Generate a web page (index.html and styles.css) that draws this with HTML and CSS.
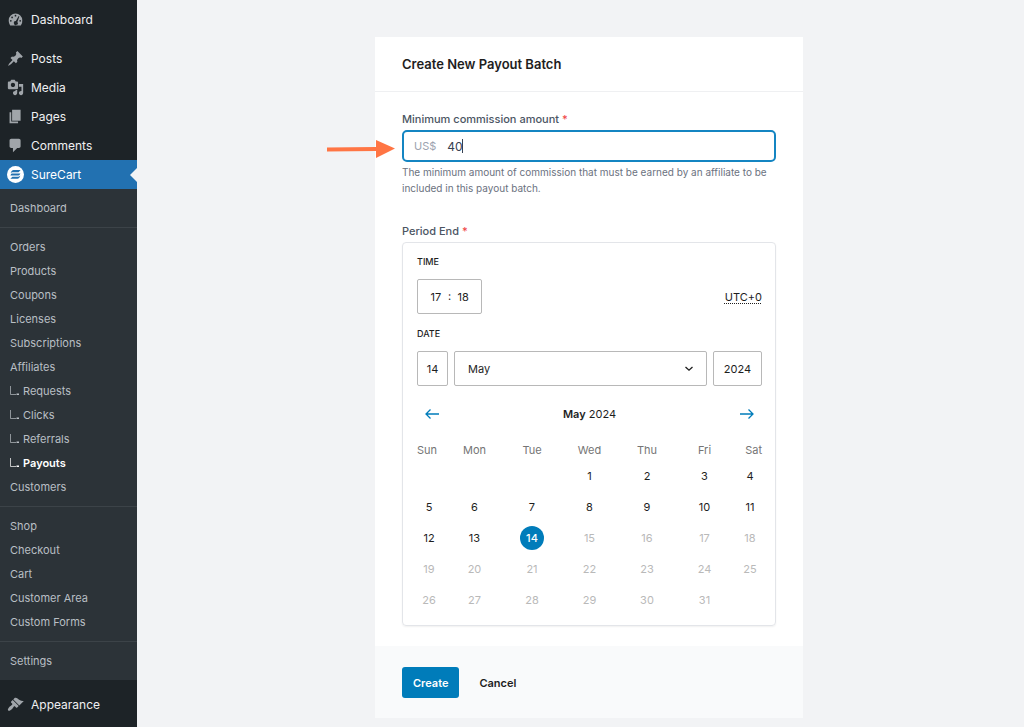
FILE: index.html
```html
<!DOCTYPE html>
<html lang="en">
<head>
<meta charset="utf-8">
<meta name="viewport" content="width=device-width, initial-scale=1">
<title>Create New Payout Batch</title>
<link rel="stylesheet" href="styles.css">
</head>
<body>
<svg class="defs" aria-hidden="true">
  <symbol id="elbow" viewBox="0 0 11 12"><path d="M.5 1v8.5H6" fill="none" stroke="currentColor" opacity=".7"/><path d="M6.500 8.500h2.500v1.500H6.500z" fill="currentColor"/></symbol>
</svg>
<div class="app">
  <nav class="sidebar">
    <ul class="menu">
      <li><a class="menu-link" href="#"><svg class="icon" viewBox="0 0 20 20"><path fill-rule="evenodd" d="M3.760 17h12.480A8 8 0 0 0 18 11a8 8 0 1 0-16 0c0 2.300.66 4.500 1.760 6zM10 4.500a1 1 0 1 1 0 2 1 1 0 0 1 0-2zM4.500 10.500a1 1 0 1 1 0 2 1 1 0 0 1 0-2zM6 6.500a1 1 0 1 1 0 2 1 1 0 0 1 0-2zM15.500 10.500a1 1 0 1 1 0 2 1 1 0 0 1 0-2zM13.800 6l.7.5-2.300 6.300a2.300 2.300 0 1 1-1.800-.9z"/></svg>Dashboard</a></li>
      <li class="gap"><a class="menu-link" href="#"><svg class="icon" viewBox="0 0 20 20"><path d="M10.440 3.020l1.820-1.820 6.360 6.350-1.830 1.820c-1.050-.68-2.480-.57-3.410.36l-.75.75c-.92.93-1.040 2.350-.35 3.410l-1.830 1.820-2.410-2.410-2.800 2.790c-.42.42-3.380 2.710-3.800 2.290s1.860-3.390 2.280-3.810l2.790-2.790L4.100 9.360l1.830-1.820c1.050.69 2.480.57 3.400-.36l.75-.75c.93-.92 1.050-2.350.36-3.410z"/></svg>Posts</a></li>
      <li><a class="menu-link" href="#"><svg class="icon" viewBox="0 0 20 20"><path fill-rule="evenodd" d="M13 11V4c0-.55-.45-1-1-1h-1.670L9 1H5L3.670 3H2c-.55 0-1 .45-1 1v7c0 .55.45 1 1 1h10c.55 0 1-.45 1-1zM7 4.500c1.380 0 2.500 1.120 2.500 2.500S8.380 9.500 7 9.500 4.500 8.380 4.500 7 5.620 4.500 7 4.500zM14 6h5v10.500c0 1.380-1.120 2.500-2.500 2.500S14 17.880 14 16.500s1.120-2.500 2.500-2.500c.17 0 .34.02.5.05V9h-3V6zm-4 8.050V13h2v3.500c0 1.380-1.120 2.500-2.500 2.500S7 17.880 7 16.500 8.120 14 9.500 14c.17 0 .34.02.5.05z"/></svg>Media</a></li>
      <li><a class="menu-link" href="#"><svg class="icon" viewBox="0 0 20 20"><path d="M6 15V2h10v13H6zm-1 1h8v2H3V5h2v11z"/></svg>Pages</a></li>
      <li><a class="menu-link" href="#"><svg class="icon" viewBox="0 0 20 20"><path d="M5 2h9c1.100 0 2 .9 2 2v7c0 1.100-.9 2-2 2h-2l-5 5v-5H5c-1.100 0-2-.9-2-2V4c0-1.100.9-2 2-2z"/></svg>Comments</a></li>
      <li><a class="menu-link current" href="#"><svg class="icon" viewBox="0 0 20 20"><circle cx="10" cy="10" r="10"/><g fill="#2271b1"><path d="M7.800 4.800h8.200L13.600 7.400H6.400C5.600 7.400 5 8 4.300 8.600 4.800 6.300 6 4.800 7.800 4.800z"/><path d="M5.600 8.700h10.200l-.7 1.400c-.3.700-.9 1.100-1.700 1.100H4l.7-1.400c.2-.6.500-.9.900-1.100z"/><path d="M3.900 15.100h8.300c1.800 0 3-1.600 3.500-3.800-.7.600-1.300 1.200-2.200 1.200H6.400z"/></g></svg>SureCart</a>
        <div class="submenu">
          <ul>
            <li><a href="#">Dashboard</a></li>
          </ul>
          <ul>
            <li><a href="#">Orders</a></li>
            <li><a href="#">Products</a></li>
            <li><a href="#">Coupons</a></li>
            <li><a href="#">Licenses</a></li>
            <li><a href="#">Subscriptions</a></li>
            <li><a href="#">Affiliates</a></li>
            <li><a href="#"><svg class="elbow"><use href="#elbow"/></svg>Requests</a></li>
            <li><a href="#"><svg class="elbow"><use href="#elbow"/></svg>Clicks</a></li>
            <li><a href="#"><svg class="elbow"><use href="#elbow"/></svg>Referrals</a></li>
            <li><a class="active" href="#"><svg class="elbow"><use href="#elbow"/></svg>Payouts</a></li>
            <li><a href="#">Customers</a></li>
          </ul>
          <ul>
            <li><a href="#">Shop</a></li>
            <li><a href="#">Checkout</a></li>
            <li><a href="#">Cart</a></li>
            <li><a href="#">Customer Area</a></li>
            <li><a href="#">Custom Forms</a></li>
          </ul>
          <ul>
            <li><a href="#">Settings</a></li>
          </ul>
        </div>
      </li>
      <li class="gap"><a class="menu-link" href="#"><svg class="icon" viewBox="0 0 20 20"><path d="M14.480 11.060L7.410 3.990l1.500-1.500c.5-.56 2.300-.47 3.510.32 1.210.8 1.430 1.280 2.910 2.100 1.180.64 2.450 1.260 4.450.85zm-.71.71L6.700 4.700 4.930 6.470c-.39.39-.39 1.020 0 1.410l1.060 1.060c.39.39.39 1.030 0 1.420-.6.6-1.430 1.110-2.210 1.690-.35.26-.7.53-1.010.84C1.430 14.230.4 16.080 1.400 17.070c.99 1 2.840-.03 4.180-1.360.31-.31.58-.66.85-1.020.57-.78 1.080-1.610 1.690-2.210.39-.39 1.020-.39 1.410 0l1.060 1.060c.39.39 1.020.39 1.410 0z"/></svg>Appearance</a></li>
      <li><a class="menu-link" href="#"><svg class="icon" viewBox="0 0 20 20"><path d="M13.110 4.360L9.870 7.600 8 5.730l3.240-3.240c.35-.34 1.050-.2 1.560.32.52.51.66 1.210.31 1.550zm-8 1.770l.91-1.120 9.010 9.010-1.190.84c-.71.71-2.630 1.160-3.820 1.160H6.140L4.900 17.260c-.59.59-1.540.59-2.120 0-.59-.58-.59-1.530 0-2.120l1.240-1.240v-3.880c0-1.130.4-3.190 1.090-3.890z"/></svg></a></li>
    </ul>
  </nav>

  <main class="content">
    <form class="card">
      <header class="card-header"><h1>Create New Payout Batch</h1></header>
      <div class="card-body">
        <label class="label" for="amount">Minimum commission amount <span class="required">*</span></label>
        <div class="money">
          <span class="prefix">US$</span>
          <input id="amount" type="text" value="40" required>
          <span class="caret"></span>
          <svg class="pointer" viewBox="0 0 68 18" aria-hidden="true"><path d="M0 7.500L49 7V0l19 8.500L49 18v-7L0 11.500z"/></svg>
        </div>
        <p class="help">The minimum amount of commission that must be earned by an affiliate to be included in this payout batch.</p>

        <div class="label" id="period">Period End <span class="required">*</span></div>
        <section class="picker" aria-labelledby="period">
          <h2>Time</h2>
          <div class="time-row">
            <div class="time">
              <input type="text" value="17" aria-label="Hours"><span>:</span><input type="text" value="18" aria-label="Minutes">
            </div>
            <abbr>UTC+0</abbr>
          </div>
          <h2>Date</h2>
          <div class="date-row">
            <input class="day-field" type="text" value="14" aria-label="Day">
            <div class="select">
              <select aria-label="Month"><option>May</option></select>
              <svg viewBox="0 0 10 6" aria-hidden="true"><path d="M1.500 1L5 4.200 8.500 1"/></svg>
            </div>
            <input class="year-field" type="text" value="2024" aria-label="Year">
          </div>
          <div class="month-nav">
            <button type="button" aria-label="Previous month"><svg viewBox="0 0 16 12"><path d="M15 6H2M6.500 1.500L2 6l4.500 4.500"/></svg></button>
            <div><strong>May</strong> 2024</div>
            <button type="button" aria-label="Next month"><svg viewBox="0 0 16 12"><path d="M1 6h13M9.500 1.500L14 6l-4.500 4.500"/></svg></button>
          </div>
          <table class="calendar">
            <colgroup><col class="edge"><col span="5"><col class="edge"></colgroup>
            <thead><tr><th>Sun</th><th>Mon</th><th>Tue</th><th>Wed</th><th>Thu</th><th>Fri</th><th>Sat</th></tr></thead>
            <tbody>
              <tr><td></td><td></td><td></td><td><button type="button">1</button></td><td><button type="button">2</button></td><td><button type="button">3</button></td><td><button type="button">4</button></td></tr>
              <tr><td><button type="button">5</button></td><td><button type="button">6</button></td><td><button type="button">7</button></td><td><button type="button">8</button></td><td><button type="button">9</button></td><td><button type="button">10</button></td><td><button type="button">11</button></td></tr>
              <tr><td><button type="button">12</button></td><td><button type="button">13</button></td><td><button type="button" class="selected">14</button></td><td><button type="button" disabled>15</button></td><td><button type="button" disabled>16</button></td><td><button type="button" disabled>17</button></td><td><button type="button" disabled>18</button></td></tr>
              <tr><td><button type="button" disabled>19</button></td><td><button type="button" disabled>20</button></td><td><button type="button" disabled>21</button></td><td><button type="button" disabled>22</button></td><td><button type="button" disabled>23</button></td><td><button type="button" disabled>24</button></td><td><button type="button" disabled>25</button></td></tr>
              <tr><td><button type="button" disabled>26</button></td><td><button type="button" disabled>27</button></td><td><button type="button" disabled>28</button></td><td><button type="button" disabled>29</button></td><td><button type="button" disabled>30</button></td><td><button type="button" disabled>31</button></td><td></td></tr>
            </tbody>
          </table>
        </section>
      </div>
      <footer class="card-footer">
        <button class="btn primary" type="submit">Create</button>
        <button class="btn" type="button">Cancel</button>
      </footer>
    </form>
  </main>
</div>
</body>
</html>
```
FILE: styles.css
```css
* { box-sizing: border-box; }

body {
  margin: 0;
  background: #f2f3f5;
  color: #1e1e1e;
  font-family: Inter, "Liberation Sans", sans-serif;
  font-size: 11px;
}

ul, h1, h2, p { margin: 0; padding: 0; }
ul { list-style: none; }
a { text-decoration: none; }
input, select, button { font: inherit; color: inherit; margin: 0; }
button { border: 0; background: none; padding: 0; cursor: pointer; }
.defs { position: absolute; width: 0; height: 0; }

.app { display: flex; height: 100vh; overflow: hidden; }

/* Sidebar */
.sidebar { flex: 0 0 137px; background: #1d2327; overflow: hidden; }
.menu { padding-top: 5px; }
.menu > .gap { margin-top: 10px; }
.menu-link {
  position: relative;
  display: flex;
  align-items: center;
  gap: 7px;
  height: 29px;
  padding-left: 7px;
  color: #f0f0f1;
  font-size: 12px;
}
.icon { width: 17px; height: 17px; fill: #a0a5aa; }
.menu-link.current { background: #2271b1; color: #fff; }
.current .icon { fill: #fff; }
.current::after {
  content: "";
  position: absolute;
  right: 0;
  top: 8px;
  border: 7px solid transparent;
  border-left-width: 0;
  border-right-color: #f2f3f5;
}
.submenu { background: #2c3338; }
.submenu ul { padding: 7px 0; }
.submenu ul + ul { border-top: 1px solid #3c4348; }
.submenu a {
  display: flex;
  align-items: center;
  gap: 2px;
  height: 24px;
  padding-left: 10px;
  color: #b9bfc4;
}
.submenu .active { color: #fff; font-weight: 600; }
.elbow { width: 11px; height: 12px; }

/* Card */
.content { flex: 1; padding: 37px 0 0 17px; }
.card { max-width: 428px; margin: 0 auto; background: #fff; }
.card-header { padding: 18px 27px; border-bottom: 1px solid #eff0f2; }
.card-header h1 { font-size: 13px; line-height: 18px; font-weight: 600; }
.card-body { padding: 18px 27px 20px; }
.label { display: block; color: #4b5563; font-weight: 500; line-height: 18px; margin-bottom: 2px; }
.required { color: #ef4444; }

.money {
  position: relative;
  display: flex;
  align-items: center;
  gap: 11px;
  height: 32px;
  padding-left: 10px;
  border: 2px solid #1485c2;
  border-radius: 5px;
}
.prefix { color: #9ca3af; }
.money input { flex: 1; min-width: 0; border: 0; padding: 0; outline: 0; background: none; color: #374151; font-size: 12px; }
.caret { position: absolute; left: 58px; top: 7px; width: 1px; height: 14px; background: #374151; }
.pointer { position: absolute; right: 100%; top: 8px; width: 68px; height: 18px; margin-right: 9px; fill: #ff7544; }
.help { margin: 2px 0 26px; color: #6b7280; font-size: 10px; line-height: 16px; }

/* Date picker */
.picker {
  padding: 12px 13px 10px 14px;
  border: 1px solid #e3e5e9;
  border-radius: 4px;
  box-shadow: 0 1px 2px rgba(0, 0, 0, .06);
}
.picker h2 { margin-bottom: 10px; font-size: 9px; line-height: 14px; font-weight: 500; text-transform: uppercase; }
.time-row { display: flex; justify-content: space-between; align-items: center; margin-bottom: 13px; }
.time, .day-field, .year-field, .select select { height: 35px; border: 1px solid #b8b8b8; border-radius: 2px; }
.picker input, .select select { background: #fff; text-align: center; padding: 0; }
.time { display: flex; align-items: center; justify-content: center; width: 65px; }
.time input { width: 24px; border: 0; }
.time span { line-height: 16px; padding-bottom: 2px; }
abbr { text-decoration: underline dotted; text-underline-offset: 2px; }
.date-row { display: flex; gap: 6px; }
.day-field { width: 31px; }
.year-field { width: 49px; }
.select { position: relative; flex: 1; }
.select select { width: 100%; padding-left: 13px; appearance: none; text-align: left; }
.select svg { position: absolute; right: 13px; top: 15px; width: 10px; height: 6px; fill: none; stroke: #1e1e1e; stroke-width: 1.3; }
.month-nav { display: flex; justify-content: space-between; align-items: center; margin: 16px 7px 13px; line-height: 24px; }
.month-nav strong { font-weight: 600; }
.month-nav button { display: flex; }
.month-nav svg { width: 16px; height: 12px; fill: none; stroke: #007cba; stroke-width: 1.3; }

.calendar { width: 100%; table-layout: fixed; border-collapse: collapse; }
.edge { width: 8.333%; }
.calendar th { height: 21px; padding: 0; color: #757575; font-weight: 400; }
.calendar td { height: 31px; padding: 0; text-align: center; }
.calendar th:first-child, .calendar td:first-child { text-align: left; }
.calendar th:last-child, .calendar td:last-child { text-align: right; }
.calendar button { width: 24px; height: 24px; border-radius: 50%; vertical-align: middle; }
.calendar button:disabled { color: #b9b9b9; }
.calendar .selected { background: #007cba; color: #fff; font-weight: 500; }

/* Footer */
.card-footer { display: flex; gap: 9px; padding: 21px 27px 20px; background: #f9fafb; }
.btn { height: 31px; padding: 0 11px; border-radius: 3px; font-weight: 600; }
.primary { background: #007cba; color: #fff; }
```
